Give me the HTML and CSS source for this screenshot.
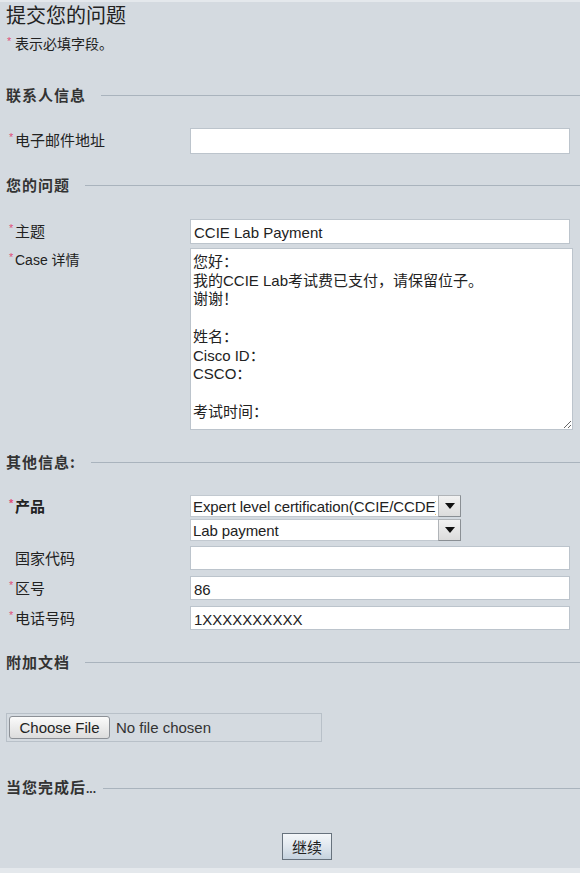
FILE: index.html
```html
<!DOCTYPE html>
<html lang="zh-CN">
<head>
<meta charset="utf-8">
<title>提交您的问题</title>
<link rel="stylesheet" href="styles.css">
</head>
<body>
<div class="page">
  <h1 class="title">提交您的问题</h1>
  <p class="note"><span class="req">*</span>表示必填字段。</p>

  <div class="section s-contact"><span class="section-text">联系人信息</span><span class="section-line"></span></div>
  <div class="row r-email">
    <label class="lbl"><span class="req">*</span>电子邮件地址</label>
    <input class="field" type="text" value="">
  </div>

  <div class="section s-question"><span class="section-text">您的问题</span><span class="section-line"></span></div>
  <div class="row r-subject">
    <label class="lbl"><span class="req">*</span>主题</label>
    <input class="field" type="text" value="CCIE Lab Payment">
  </div>
  <div class="row r-case">
    <label class="lbl"><span class="req">*</span>Case 详情</label>
    <textarea class="area">您好：
我的CCIE Lab考试费已支付，请保留位子。
谢谢！

姓名：
Cisco ID：
CSCO：

考试时间：</textarea>
  </div>

  <div class="section s-other"><span class="section-text">其他信息:</span><span class="section-line"></span></div>
  <div class="row r-product">
    <label class="lbl bold"><span class="req">*</span>产品</label>
    <div class="selects">
      <div class="sel">
        <select class="sel-box"><option>Expert level certification(CCIE/CCDE)</option></select>
        <span class="sel-arrow"><svg width="10" height="6" viewBox="0 0 10 6"><path d="M0 0H10L5 6Z" fill="#111"/></svg></span>
      </div>
      <div class="sel">
        <select class="sel-box"><option>Lab payment</option></select>
        <span class="sel-arrow"><svg width="10" height="6" viewBox="0 0 10 6"><path d="M0 0H10L5 6Z" fill="#111"/></svg></span>
      </div>
    </div>
  </div>
  <div class="row r-country">
    <label class="lbl"><span class="req blank">*</span>国家代码</label>
    <input class="field" type="text" value="">
  </div>
  <div class="row r-zone">
    <label class="lbl"><span class="req">*</span>区号</label>
    <input class="field" type="text" value="86">
  </div>
  <div class="row r-phone">
    <label class="lbl"><span class="req">*</span>电话号码</label>
    <input class="field" type="text" value="1XXXXXXXXXX">
  </div>

  <div class="section s-attach"><span class="section-text">附加文档</span><span class="section-line"></span></div>
  <div class="file">
    <button class="file-btn" type="button">Choose File</button>
    <span class="file-name">No file chosen</span>
  </div>

  <div class="section s-done"><span class="section-text">当您完成后<span class="dots">...</span></span><span class="section-line"></span></div>
  <div class="actions">
    <button class="go" type="button">继续</button>
  </div>
</div>
<div class="footer"></div>
</body>
</html>
```
FILE: styles.css
```css
html, body {
  margin: 0;
  padding: 0;
}
body {
  background: #d4dae0;
  font-family: "Liberation Sans", "Noto Sans CJK SC", sans-serif;
  color: #222;
  border-top: 2px solid #e4e8ec;
  width: 580px;
  height: 871px;
  overflow: hidden;
  display: flex;
  flex-direction: column;
}
.page {
  padding: 0 0 0 6px;
  flex: 1;
}
.title {
  margin: 1px 0 0 0;
  font-family: "Noto Sans CJK SC", sans-serif;
  font-size: 20px;
  font-weight: normal;
  line-height: 24px;
  color: #222;
}
.note {
  margin: 7px 0 0 0;
  font-family: "Noto Sans CJK SC", sans-serif;
  font-size: 14px;
  line-height: 18px;
}
.req {
  color: #e0507a;
  font-family: "Liberation Sans", sans-serif;
  font-size: 11px;
  display: inline-block;
  width: 6px;
  vertical-align: top;
  line-height: 14px;
}
.note .req {
  margin-left: 1px;
  margin-right: 2px;
}
.req.blank {
  visibility: hidden;
}

.section {
  display: flex;
  align-items: center;
  height: 20px;
}
.section-text {
  font-family: "Noto Sans CJK SC", sans-serif;
  font-size: 15px;
  font-weight: bold;
  letter-spacing: 1px;
  color: #333;
  line-height: 20px;
}
.dots {
  font-family: "Liberation Sans", sans-serif;
  font-size: 12px;
  letter-spacing: 0;
}
.section-line {
  flex: 1;
  height: 1px;
  background: #a9b3bd;
  margin-left: 15px;
}
.s-done .section-line {
  margin-left: 7px;
}
.s-contact { margin-top: 33px; }
.s-question { margin-top: 21px; }
.s-other { margin-top: 22px; }
.s-attach { margin-top: 22px; }
.s-done { margin-top: 36px; }

.row {
  display: grid;
  grid-template-columns: 184px 1fr;
  align-items: start;
}
.lbl {
  padding: 2px 0 0 3px;
  font-family: "Noto Sans CJK SC", sans-serif;
  font-size: 15px;
  line-height: 20px;
  color: #222;
}
.lbl.bold {
  font-weight: bold;
}
.r-case .lbl {
  font-family: "Liberation Sans", "Noto Sans CJK SC", sans-serif;
  font-size: 14px;
}
.field {
  box-sizing: border-box;
  width: 380px;
  height: 26px;
  margin: 0;
  border: 1px solid #bcc4cc;
  background: #fff;
  padding: 2px 3px 0;
  font-family: "Liberation Sans", sans-serif;
  font-size: 15px;
  color: #222;
  outline: none;
}
.r-email { margin-top: 23px; }
.r-subject { margin-top: 24px; }
.r-subject .field { height: 25px; }
.r-case { margin-top: 4px; }
.r-product { margin-top: 22px; }
.r-country { margin-top: 5px; }
.r-country .field,
.r-zone .field,
.r-phone .field { height: 24px; }
.r-zone { margin-top: 6px; }
.r-phone { margin-top: 6px; }

.area {
  box-sizing: border-box;
  width: 383px;
  height: 182px;
  margin: 0;
  border: 1px solid #bcc4cc;
  background: #fff;
  padding: 4px 2px;
  font-family: "Liberation Sans", "Noto Sans CJK SC", sans-serif;
  font-size: 15px;
  line-height: 18.7px;
  color: #222;
  resize: both;
  outline: none;
  overflow: hidden;
}

.selects {
  display: flex;
  flex-direction: column;
  gap: 2px;
  padding-top: 1px;
}
.sel {
  display: flex;
  height: 22px;
}
.sel-box {
  appearance: none;
  -webkit-appearance: none;
  box-sizing: border-box;
  width: 248px;
  height: 22px;
  margin: 0;
  border: 1px solid #c2c9d0;
  border-right: none;
  background: #fff;
  padding: 0 2px;
  font-family: "Liberation Sans", sans-serif;
  font-size: 15px;
  letter-spacing: -0.1px;
  color: #222;
  outline: none;
  border-radius: 0;
  white-space: nowrap;
  overflow: hidden;
}
.sel-arrow {
  box-sizing: border-box;
  width: 23px;
  height: 22px;
  display: flex;
  align-items: center;
  justify-content: center;
  background: linear-gradient(#f2f2f2, #dcdcdc);
  border: 1px solid #8a8f94;
  border-top-color: #b0b4b8;
  border-left-color: #b0b4b8;
}

.file {
  margin-top: 41px;
  box-sizing: border-box;
  width: 316px;
  height: 29px;
  border: 1px solid #b8c0c8;
  display: flex;
  align-items: center;
  padding-left: 2px;
  gap: 6px;
}
.file-btn {
  box-sizing: border-box;
  height: 23px;
  width: 101px;
  padding: 0;
  margin: 0;
  border: 1px solid #8c9096;
  border-radius: 3px;
  background: linear-gradient(#fbfbfb, #dcdcdc);
  font-family: "Liberation Sans", sans-serif;
  font-size: 15px;
  color: #222;
}
.file-name {
  font-family: "Liberation Sans", sans-serif;
  font-size: 15px;
  color: #333;
}

.actions {
  margin-top: 35px;
  padding-left: 276px;
}
.go {
  box-sizing: border-box;
  width: 50px;
  height: 27px;
  margin: 0;
  padding: 0;
  border: 1px solid #67727d;
  background: linear-gradient(#f4f7fa 0%, #e0e7ee 50%, #c5d2de 100%);
  font-family: "Noto Sans CJK SC", sans-serif;
  font-size: 15px;
  color: #222;
}
.footer {
  height: 5px;
  background: #e4e8ec;
}
```
